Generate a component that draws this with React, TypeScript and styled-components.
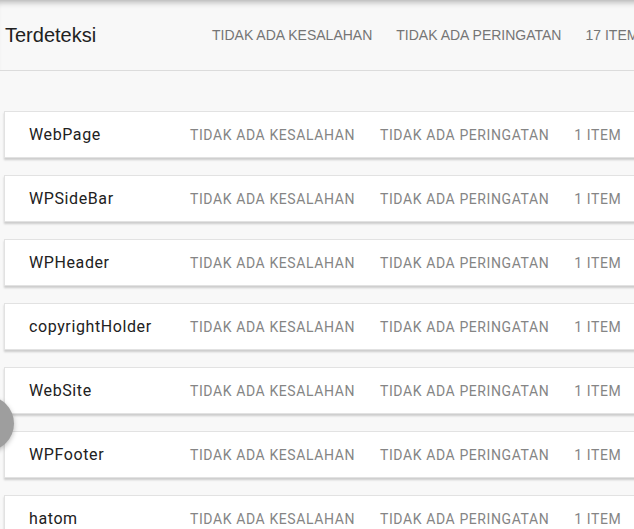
import React from 'react'
import styled, { createGlobalStyle } from 'styled-components'

const GlobalStyle = createGlobalStyle`
  html, body {
    margin: 0;
    padding: 0;
    background: #f8f8f8;
    overflow: hidden;
  }
`

const Page = styled.div`
  position: relative;
  width: 760px;
  min-height: 529px;
  background: #f8f8f8;
`

const Header = styled.div`
  display: flex;
  align-items: center;
  height: 70px;
  padding-left: 5px;
  border-bottom: 1px solid #dcdcdc;
  box-shadow: inset 0 7px 6px -5px rgba(0, 0, 0, 0.3);
`

const Title = styled.div`
  width: 195px;
  font-family: 'Liberation Sans', Arial, sans-serif;
  font-size: 20px;
  color: #212121;
`

const HeaderStat = styled.div`
  margin: 0 12px;
  font-family: 'Liberation Sans', Arial, sans-serif;
  font-size: 14px;
  color: #757575;
  text-transform: uppercase;
  white-space: nowrap;
`

const List = styled.div`
  display: flex;
  flex-direction: column;
  gap: 17px;
  padding: 40px 0 0 4px;
`

const Card = styled.div`
  display: flex;
  align-items: center;
  height: 45px;
  padding-left: 24px;
  background: #fff;
  border: 1px solid #e2e2e2;
  border-right: none;
  box-shadow: 0 2px 2px rgba(0, 0, 0, 0.18);
`

const Name = styled.div`
  width: 161px;
  font-family: Roboto, 'Noto Sans', sans-serif;
  font-size: 16px;
  letter-spacing: 0.6px;
  color: #212121;
`

const Stat = styled.div`
  margin-right: 25px;
  font-family: Roboto, 'Noto Sans', sans-serif;
  font-size: 14px;
  letter-spacing: 0.6px;
  color: #858585;
  text-transform: uppercase;
  white-space: nowrap;
`

const Fab = styled.div`
  position: absolute;
  left: -41px;
  top: 396px;
  width: 55px;
  height: 55px;
  border-radius: 50%;
  background: #9e9e9e;
  box-shadow: 0 2px 5px rgba(0, 0, 0, 0.25);
`

const items = ['WebPage', 'WPSideBar', 'WPHeader', 'copyrightHolder', 'WebSite', 'WPFooter', 'hatom']

export default function App() {
  return (
    <Page>
      <GlobalStyle />
      <Header>
        <Title>Terdeteksi</Title>
        <HeaderStat>Tidak ada kesalahan</HeaderStat>
        <HeaderStat>Tidak ada peringatan</HeaderStat>
        <HeaderStat>17 item</HeaderStat>
      </Header>
      <List>
        {items.map(name => (
          <Card key={name}>
            <Name>{name}</Name>
            <Stat>Tidak ada kesalahan</Stat>
            <Stat>Tidak ada peringatan</Stat>
            <Stat>1 item</Stat>
          </Card>
        ))}
      </List>
      <Fab />
    </Page>
  )
}
